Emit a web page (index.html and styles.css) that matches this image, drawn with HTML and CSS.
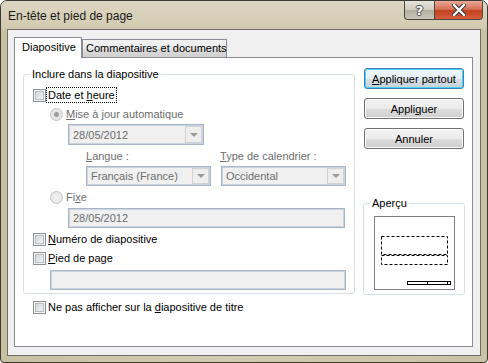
FILE: index.html
```html
<!DOCTYPE html>
<html lang="fr">
  <head>
    <meta charset="UTF-8" />
    <title>En-tête et pied de page</title>
    <link rel="stylesheet" href="styles.css">
  </head>

  <body>
    <div class="window">
      <div class="titlebar">
        <span class="title">En-tête et pied de page</span>
        <div class="caption">
          <div class="cap help">?</div>
          <div class="cap close">
            <svg width="14" height="12" viewBox="0 0 14 12">
              <path d="M2 1 L12 11 M12 1 L2 11" stroke="#3a3a3a" stroke-width="4.4" stroke-linecap="round" />
              <path d="M2 1 L12 11 M12 1 L2 11" stroke="#ffffff" stroke-width="2.4" stroke-linecap="round" />
            </svg>
          </div>
        </div>
      </div>

      <div class="client">
        <div class="tabs">
          <div class="tab active">Diapositive</div>
          <div class="tab">Commentaires et documents</div>
        </div>

        <div class="panel">
          <div class="main">
            <div class="group">
              <div class="group-title">Inclure dans la diapositive</div>
              <div class="group-body">
                <div class="row check-row first">
                  <span class="checkbox"></span>
                  <span class="label focus">Date et <u>h</u>eure</span>
                </div>

                <div class="row radio-row">
                  <span class="radio checked"></span>
                  <span class="label off"><u>M</u>ise à jour automatique</span>
                </div>

                <div class="combo date-combo">
                  <span class="value">28/05/2012</span>
                  <span class="drop"></span>
                </div>

                <div class="row label-row">
                  <span class="off lang-label"><u>L</u>angue :</span>
                  <span class="off"><u>T</u>ype de calendrier :</span>
                </div>

                <div class="combo-row">
                  <div class="combo small-combo">
                    <span class="value">Français (France)</span>
                    <span class="drop"></span>
                  </div>
                  <div class="combo small-combo">
                    <span class="value">Occidental</span>
                    <span class="drop"></span>
                  </div>
                </div>

                <div class="row radio-row">
                  <span class="radio"></span>
                  <span class="label off">Fi<u>x</u>e</span>
                </div>

                <div class="textbox fixed-box">28/05/2012</div>

                <div class="row check-row">
                  <span class="checkbox"></span>
                  <span class="label"><u>N</u>uméro de diapositive</span>
                </div>

                <div class="row check-row">
                  <span class="checkbox"></span>
                  <span class="label"><u>P</u>ied de page</span>
                </div>

                <div class="textbox footer-box"></div>
              </div>
            </div>

            <div class="row check-row outside">
              <span class="checkbox"></span>
              <span class="label">Ne pas afficher sur la <u>d</u>iapositive de titre</span>
            </div>
          </div>

          <div class="side">
            <button class="btn default"><u>A</u>ppliquer partout</button>
            <button class="btn">Appli<u>q</u>uer</button>
            <button class="btn">Annuler</button>

            <div class="group preview-group">
              <div class="group-title">Aperçu</div>
              <div class="preview">
                <svg width="81" height="74" viewBox="0 0 81 74">
                  <rect x="0.5" y="0.5" width="80" height="73" fill="#ffffff" stroke="#7f7f7f" />
                  <rect x="7.5" y="20.5" width="66" height="18" fill="none" stroke="#000" stroke-dasharray="3 2" />
                  <rect x="7.5" y="39.5" width="66" height="9" fill="none" stroke="#000" stroke-dasharray="3 2" />
                  <rect x="33.5" y="65.5" width="43" height="3" fill="#fff" stroke="#000" />
                  <line x1="53.5" y1="65" x2="53.5" y2="69" stroke="#000" />
                  <line x1="73.5" y1="65" x2="73.5" y2="69" stroke="#000" />
                </svg>
              </div>
            </div>
          </div>
        </div>
      </div>
    </div>
  </body>
</html>
```

FILE: styles.css
```css
body {
  margin: 0;
  width: 488px;
  height: 363px;
  background-color: #ffffff;
  font-family: "Liberation Sans", Arial, sans-serif;
  font-size: 11px;
  color: #000000;
}

u {
  text-decoration: underline;
  text-underline-offset: 1px;
}

/* Fenêtre */

.window {
  box-sizing: border-box;
  width: 488px;
  height: 363px;
  display: flex;
  flex-direction: column;
  border: 1px solid #3b3a35;
  border-radius: 7px 7px 4px 4px;
  background: linear-gradient(90deg, #c9c0a3 0%, #d3cbb3 45%, #cbc2a6 100%);
  overflow: hidden;
}

.titlebar {
  height: 28px;
  display: flex;
  align-items: flex-start;
  background: linear-gradient(180deg, #ddd6c3 0%, #d2caaf 100%);
}

.title {
  margin: 7px 0 0 7px;
  font-family: "Liberation Sans", sans-serif;
  font-size: 12px;
  line-height: 16px;
  color: #1a1a1a;
}

.caption {
  display: flex;
  margin-left: auto;
  margin-right: 4px;
}

.cap {
  box-sizing: border-box;
  height: 19px;
  display: flex;
  justify-content: center;
  align-items: center;
  border: 1px solid #4a4841;
  border-top: none;
}

.help {
  width: 30px;
  border-radius: 0 0 0 4px;
  border-right: none;
  background: linear-gradient(180deg, #e7e4da 0%, #d0ccbf 48%, #b4b0a2 52%, #c8c5b8 100%);
  color: #ffffff;
  font-family: "DejaVu Sans", sans-serif;
  font-weight: bold;
  font-size: 13px;
  text-shadow: 0 0 1px #333, 1px 0 0 #555, -1px 0 0 #555, 0 1px 0 #555, 0 -1px 0 #555;
}

.close {
  width: 49px;
  border-radius: 0 0 4px 0;
  background: linear-gradient(180deg, #e9a996 0%, #d8705a 45%, #c4401f 55%, #d5603f 100%);
}

/* Zone client */

.client {
  flex: 1;
  display: flex;
  flex-direction: column;
  margin: 0 6px 6px 6px;
  padding: 7px 7px 8px 6px;
  border: 1px solid #6f6d66;
  background-color: #f0f0f0;
}

.tabs {
  display: flex;
  align-items: flex-end;
  height: 20px;
}

.tab {
  box-sizing: border-box;
  height: 18px;
  padding: 2px 0 0 3px;
  border: 1px solid #898c95;
  border-bottom: none;
  background: linear-gradient(180deg, #f2f2f2 0%, #ebebeb 50%, #dddddd 51%, #cfcfcf 100%);
  width: 145px;
  white-space: nowrap;
}

.tab.active {
  position: relative;
  z-index: 1;
  height: 21px;
  width: 68px;
  margin-bottom: -1px;
  padding: 3px 0 0 7px;
  background: #ffffff;
}

.panel {
  flex: 1;
  display: flex;
  padding: 10px 0 0 8px;
  border: 1px solid #898c95;
  background-color: #ffffff;
}

/* Groupes */

.group {
  box-sizing: border-box;
  border: 1px solid #d5dfe5;
  border-radius: 3px;
}

.group-title {
  width: fit-content;
  margin: -7px 0 0 6px;
  padding: 0 2px;
  line-height: 13px;
  background-color: #ffffff;
}

.main {
  width: 332px;
}

.main .group {
  margin-top: 6px;
  padding-bottom: 3px;
}

.group-body {
  display: flex;
  flex-direction: column;
  padding-left: 9px;
}

.row {
  display: flex;
  align-items: center;
  height: 16px;
  margin-top: 3px;
}

.row.first {
  margin-top: 6px;
}

.check-row {
  gap: 1px;
}

.radio-row {
  gap: 2px;
  margin-left: 17px;
}

.label {
  padding: 0 1px;
  line-height: 14px;
}

.label.focus {
  outline: 1px dotted #000000;
}

.off {
  color: #6d6d6d;
}

.checkbox {
  box-sizing: border-box;
  width: 13px;
  height: 13px;
  flex: none;
  border: 1px solid #8e8f8f;
  background: linear-gradient(135deg, #c9cdd3 0%, #e8e9eb 60%, #f6f6f6 100%);
  box-shadow: inset 0 0 0 1px #f4f4f4, inset 0 0 0 2px #b7bcc2;
}

.radio {
  box-sizing: border-box;
  width: 13px;
  height: 13px;
  flex: none;
  border: 1px solid #c2c2c2;
  border-radius: 50%;
  background: radial-gradient(circle, #f4f4f4 0%, #e2e2e2 100%);
}

.radio.checked {
  background: radial-gradient(circle, #9a9a9a 0%, #a6a6a6 30%, #e3e3e3 36%, #ececec 100%);
}

.label-row {
  margin: 4px 0 0 53px;
  height: 14px;
}

.lang-label {
  width: 134px;
}

/* Listes et zones de texte */

.combo {
  box-sizing: border-box;
  display: flex;
  align-items: center;
  height: 21px;
  border: 1px solid #a7b5c6;
  box-shadow: inset 0 0 0 1px #cbd4de;
  background-color: #f0f0f0;
  color: #6d6d6d;
}

.combo .value {
  flex: 1;
  padding-left: 4px;
}

.drop {
  box-sizing: border-box;
  width: 17px;
  height: 17px;
  margin-right: 1px;
  border: 1px solid #cfd2d6;
  background-color: #eeeeee;
  display: flex;
  justify-content: center;
  align-items: center;
}

.drop::after {
  content: "";
  border-left: 4px solid transparent;
  border-right: 4px solid transparent;
  border-top: 4px solid #9a9a9a;
}

.date-combo {
  width: 136px;
  margin: 2px 0 0 35px;
}

.combo-row {
  display: flex;
  gap: 10px;
  margin: 3px 0 0 53px;
}

.small-combo {
  width: 125px;
  height: 20px;
}

.small-combo .drop {
  height: 16px;
}

.textbox {
  box-sizing: border-box;
  height: 20px;
  display: flex;
  align-items: center;
  padding-left: 4px;
  border: 1px solid #a7b5c6;
  box-shadow: inset 0 0 0 1px #cbd4de;
  background-color: #f0f0f0;
  color: #6d6d6d;
}

.fixed-box {
  width: 277px;
  margin: 3px 0 0 35px;
}

.footer-box {
  width: 296px;
  margin: 4px 0 0 17px;
}

.outside {
  margin: 5px 0 0 10px;
}

/* Boutons */

.side {
  display: flex;
  flex-direction: column;
  width: 102px;
  margin-left: 8px;
}

.btn {
  box-sizing: border-box;
  width: 100px;
  height: 21px;
  margin: 0 0 9px 1px;
  padding: 0;
  border: 1px solid #707070;
  border-radius: 3px;
  background: linear-gradient(180deg, #f2f2f2 0%, #ebebeb 50%, #dddddd 51%, #cfcfcf 100%);
  box-shadow: inset 0 0 0 1px #fcfcfc;
  font-family: "Liberation Sans", Arial, sans-serif;
  font-size: 11px;
  color: #000000;
}

.btn.default {
  border-color: #3c7fb1;
  box-shadow: inset 0 0 0 1px #48d2ff;
  background: linear-gradient(180deg, #f0f6fa 0%, #e6eef3 50%, #d6dfe6 51%, #c7d2da 100%);
}

.preview-group {
  height: 92px;
  margin-top: 45px;
}

.preview {
  margin: 6px 0 0 10px;
  line-height: 0;
}
```
